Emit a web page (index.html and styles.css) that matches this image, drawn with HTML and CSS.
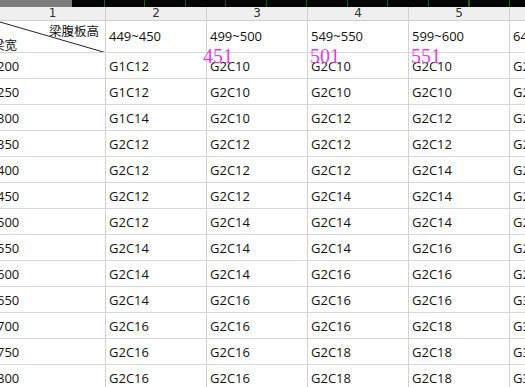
FILE: index.html
```html
<!DOCTYPE html>
<html lang="zh">
<head>
<meta charset="utf-8">
<link rel="stylesheet" href="styles.css">
</head>
<body>
<div class="topbar"><div class="tb-gray"></div><div class="tb-dark"></div></div>
<div class="sheet">
  <div class="grid">
    <div class="ch">1</div><div class="ch">2</div><div class="ch">3</div><div class="ch">4</div><div class="ch">5</div><div class="ch">6</div>

    <div class="corner">
      <svg class="diag" width="106" height="32" viewBox="0 0 106 32"><line x1="0" y1="1" x2="105" y2="31.5" stroke="#222" stroke-width="1"/></svg>
      <span class="c-top">梁腹板高</span>
      <span class="c-bot">梁宽</span>
    </div>
    <div class="hd">449~450</div><div class="hd">499~500</div><div class="hd">549~550</div><div class="hd">599~600</div><div class="hd">649~650</div>

    <div class="rh">200</div><div class="c">G1C12</div><div class="c">G2C10</div><div class="c">G2C10</div><div class="c">G2C10</div><div class="c">G2C10</div>
    <div class="rh">250</div><div class="c">G1C12</div><div class="c">G2C10</div><div class="c">G2C10</div><div class="c">G2C10</div><div class="c">G2C10</div>
    <div class="rh">300</div><div class="c">G1C14</div><div class="c">G2C10</div><div class="c">G2C12</div><div class="c">G2C12</div><div class="c">G2C12</div>
    <div class="rh">350</div><div class="c">G2C12</div><div class="c">G2C12</div><div class="c">G2C12</div><div class="c">G2C12</div><div class="c">G2C12</div>
    <div class="rh">400</div><div class="c">G2C12</div><div class="c">G2C12</div><div class="c">G2C12</div><div class="c">G2C14</div><div class="c">G2C14</div>
    <div class="rh">450</div><div class="c">G2C12</div><div class="c">G2C12</div><div class="c">G2C14</div><div class="c">G2C14</div><div class="c">G2C14</div>
    <div class="rh">500</div><div class="c">G2C12</div><div class="c">G2C14</div><div class="c">G2C14</div><div class="c">G2C14</div><div class="c">G2C16</div>
    <div class="rh">550</div><div class="c">G2C14</div><div class="c">G2C14</div><div class="c">G2C14</div><div class="c">G2C16</div><div class="c">G2C16</div>
    <div class="rh">600</div><div class="c">G2C14</div><div class="c">G2C14</div><div class="c">G2C16</div><div class="c">G2C16</div><div class="c">G2C16</div>
    <div class="rh">650</div><div class="c">G2C14</div><div class="c">G2C16</div><div class="c">G2C16</div><div class="c">G2C16</div><div class="c">G3C16</div>
    <div class="rh">700</div><div class="c">G2C16</div><div class="c">G2C16</div><div class="c">G2C16</div><div class="c">G2C18</div><div class="c">G3C16</div>
    <div class="rh">750</div><div class="c">G2C16</div><div class="c">G2C16</div><div class="c">G2C18</div><div class="c">G2C18</div><div class="c">G3C18</div>
    <div class="rh">800</div><div class="c">G2C16</div><div class="c">G2C16</div><div class="c">G2C18</div><div class="c">G2C18</div><div class="c">G3C18</div>
  </div>
  <span class="mark m1">451</span>
  <span class="mark m2">501</span>
  <span class="mark m3">551</span>
</div>
</body>
</html>
```
FILE: styles.css
```css
html, body {
  margin: 0;
  padding: 0;
  background: #fff;
  width: 525px;
  height: 387px;
  overflow: hidden;
}
body {
  font-family: "Open Sans", "Noto Sans CJK SC", sans-serif;
  font-size: 13px;
  color: #111;
}
.topbar {
  display: flex;
  height: 7px;
}
.tb-gray {
  width: 72px;
  background: #7d7d7d;
}
.tb-dark {
  flex: 1;
  background-color: #050505;
  background-image: repeating-linear-gradient(to right, transparent 0, transparent 32px, #1d5a1d 32px, #1d5a1d 33px, transparent 33px, transparent 40.5px);
}
.sheet {
  position: relative;
  width: 525px;
  overflow: hidden;
}
.grid {
  display: grid;
  grid-template-columns: 106px repeat(4, 101px) 120px;
  grid-template-rows: 14px 32px;
  grid-auto-rows: 26px;
  width: 630px;
}
.grid > div {
  box-sizing: border-box;
  border-right: 1px solid #d2d2d2;
  border-bottom: 1px solid #d6d6d6;
  overflow: hidden;
  white-space: nowrap;
}
.ch {
  background: #efefef;
  border-bottom-color: #cfcfcf !important;
  text-align: center;
  font-family: "DejaVu Sans", sans-serif;
  font-size: 12px;
  line-height: 13px;
  color: #333;
}
.corner {
  position: relative;
  display: flex;
  flex-direction: column;
  justify-content: space-between;
  font-family: "Noto Sans CJK SC", sans-serif;
  font-size: 12.5px;
  line-height: 14px;
}
.diag {
  position: absolute;
  left: 0;
  top: 0;
}
.c-top {
  align-self: flex-end;
  margin: 3px 6px 0 0;
}
.c-bot {
  margin: 0 0 2px -8px;
}
.hd, .c, .rh {
  display: flex;
  align-items: center;
  padding-left: 3px;
}
.rh {
  padding-left: 0;
  text-indent: -3px;
}
.hd {
  padding-bottom: 2px;
}
.mark {
  position: absolute;
  top: 39px;
  font-family: "Liberation Serif", serif;
  font-size: 20px;
  line-height: 20px;
  color: #e23fe2;
}
.m1 { left: 203px; }
.m2 { left: 310px; }
.m3 { left: 411px; }
```
